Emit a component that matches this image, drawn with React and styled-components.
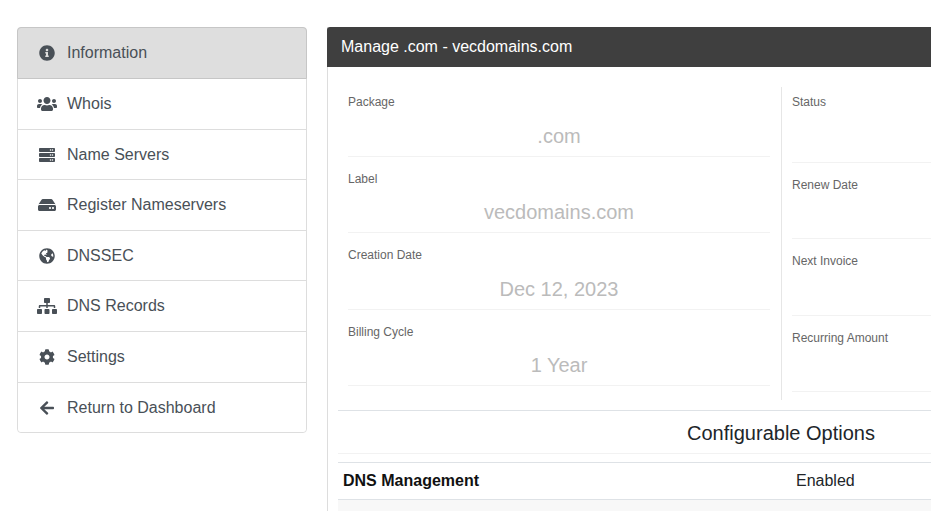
import React from "react";
import styled, { createGlobalStyle, css } from "styled-components";
import { FaInfoCircle, FaUsers, FaServer, FaHdd, FaGlobeAmericas, FaSitemap, FaCog, FaArrowLeft } from "react-icons/fa";

const Global = createGlobalStyle`
  html, body { margin: 0; padding: 0; height: 100%; overflow: hidden; background: #fff; }
  body { font-family: "Liberation Sans", Arial, sans-serif; }
`;
const Page = styled.div`
  display: flex;
  gap: 20px;
  width: 931px;
  height: 511px;
  box-sizing: border-box;
  padding: 27px 0 0 17px;
  align-items: flex-start;
  overflow: hidden;
`;
const Menu = styled.nav`
  flex: none;
  width: 290px;
  box-sizing: border-box;
  margin-top: 0.22px;
  border: 1px solid #ddd;
  border-radius: 4px;
  display: flex;
  flex-direction: column;
`;
const MenuItem = styled.div`
  display: flex;
  align-items: center;
  height: 50.65px;
  box-sizing: border-box;
  padding: 0.36px 0 0 19px;
  font-size: 16px;
  color: #495057;
  background: #fff;
  border-bottom: 1px solid #ddd;
  &:last-child { border-bottom: 0; height: 49.4px; border-radius: 0 0 4px 4px; }
  ${p => p.$active && css`
    height: 51.65px;
    margin: -1px -1px 0;
    padding-top: 0;
    background: #dedede;
    border: 1px solid #c6c6c6;
    border-radius: 4px 4px 0 0;
  `}
`;
const IconSlot = styled.span`
  width: 20px;
  margin-right: 10px;
  display: flex;
  justify-content: center;
  color: #495057;
  svg { flex: none; }
`;
const Panel = styled.main`
  flex: none;
  width: 908px;
  height: 484px;
  box-sizing: border-box;
  border-left: 1px solid #ddd;
`;
const PanelHead = styled.header`
  height: 40px;
  margin-left: -1px;
  box-sizing: border-box;
  padding: 0 14px;
  display: flex;
  align-items: center;
  background: #3f3f3f;
  color: #fff;
  font-size: 16px;
  border-radius: 3px 3px 0 0;
`;
const PanelBody = styled.div`
  padding: 20px 11px 0 10px;
`;
const Columns = styled.section`
  display: grid;
  grid-template-columns: 443px 1fr;
  height: 313px;
`;
const LeftCol = styled.div`
  padding: 0 11px 0 10px;
`;
const RightCol = styled.div`
  border-left: 1px solid #e6e6e6;
  padding: 0 12px 0 10px;
`;
const Field = styled.div`
  box-sizing: border-box;
  height: ${p => (p.$tall ? "75.5px" : "69.6px")};
  margin-bottom: 7px;
  padding-top: 8px;
  border-bottom: 1px solid #f2f2f2;
`;
const Label = styled.div`
  font-size: 12px;
  line-height: 14px;
  color: #666;
`;
const Value = styled.div`
  margin-top: 14.5px;
  text-align: center;
  font-size: 20px;
  line-height: 24px;
  color: #bbb;
`;
const OptionsTitle = styled.h3`
  margin: 10px 0 0;
  height: 44px;
  box-sizing: border-box;
  padding-top: 2px;
  border-top: 1px solid #dee2e6;
  border-bottom: 1px solid #f2f2f2;
  display: flex;
  align-items: center;
  justify-content: center;
  font-size: 20px;
  font-weight: 400;
  color: #212529;
`;
const OptionRow = styled.div`
  margin-top: 8px;
  height: 38px;
  box-sizing: border-box;
  border-top: 1px solid #dee2e6;
  border-bottom: 1px solid #dee2e6;
  display: grid;
  grid-template-columns: 453px 1fr;
  align-items: center;
  padding-left: 5px;
  font-size: 16px;
  color: #212529;
`;
const OptionName = styled.strong`
  font-weight: 700;
  color: #111;
`;
const Stripe = styled.div`
  height: 12px;
  background: #f8f8f8;
`;

const menu = [
  [FaInfoCircle, "Information", 16, true],
  [FaUsers, "Whois", 20],
  [FaServer, "Name Servers", 16],
  [FaHdd, "Register Nameservers", 18],
  [FaGlobeAmericas, "DNSSEC", 16],
  [FaSitemap, "DNS Records", 20],
  [FaCog, "Settings", 16],
  [FaArrowLeft, "Return to Dashboard", 16],
];
const left = [["Package", ".com"], ["Label", "vecdomains.com"], ["Creation Date", "Dec 12, 2023"], ["Billing Cycle", "1 Year"]];
const right = ["Status", "Renew Date", "Next Invoice", "Recurring Amount"];

export default function App() {
  return (
    <>
      <Global />
      <Page>
        <Menu>
          {menu.map(([Icon, text, size, active]) => (
            <MenuItem key={text} $active={active}>
              <IconSlot><Icon size={size} /></IconSlot>
              {text}
            </MenuItem>
          ))}
        </Menu>
        <Panel>
          <PanelHead>Manage .com - vecdomains.com</PanelHead>
          <PanelBody>
            <Columns>
              <LeftCol>
                {left.map(([l, v]) => (
                  <Field key={l}>
                    <Label>{l}</Label>
                    <Value>{v}</Value>
                  </Field>
                ))}
              </LeftCol>
              <RightCol>
                {right.map((l, i) => (
                  <Field key={l} $tall={i === 0}>
                    <Label>{l}</Label>
                  </Field>
                ))}
              </RightCol>
            </Columns>
            <OptionsTitle>Configurable Options</OptionsTitle>
            <OptionRow>
              <OptionName>DNS Management</OptionName>
              <span>Enabled</span>
            </OptionRow>
            <Stripe />
          </PanelBody>
        </Panel>
      </Page>
    </>
  );
}
